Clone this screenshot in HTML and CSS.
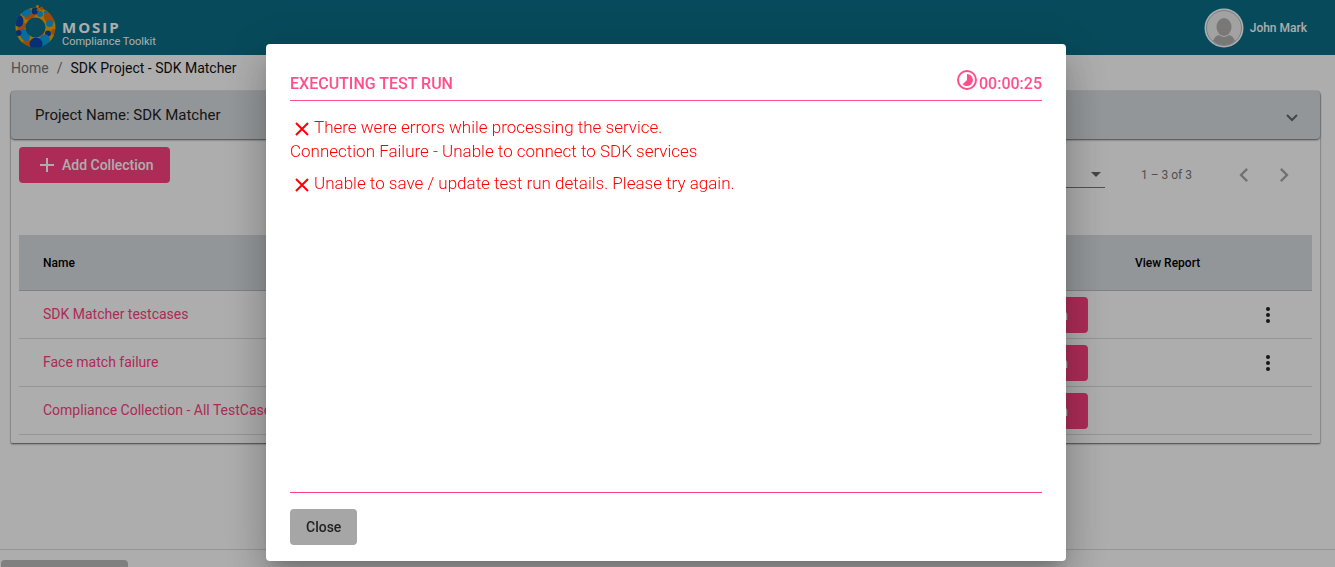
FILE: index.html
```html
<!DOCTYPE html>
<html lang="en">
<head>
<meta charset="utf-8">
<meta name="viewport" content="width=device-width, initial-scale=1">
<title>Compliance Toolkit</title>
<link rel="stylesheet" href="styles.css">
</head>
<body>
<div class="page">
  <header class="topbar">
    <a class="brand" href="#">
      <svg class="brand-mark" viewBox="0 0 41 45" aria-hidden="true">
        <defs><mask id="ring"><circle cx="20.500" cy="22.500" r="20" fill="#fff"/><circle cx="20.500" cy="22.500" r="10" fill="#000"/></mask></defs>
        <g mask="url(#ring)">
          <rect width="41" height="45" fill="#f2a900"/>
          <ellipse cx="15" cy="11" rx="6" ry="3" transform="rotate(-25 15 11)" fill="#e86c10"/>
          <circle cx="11" cy="7" r="5" fill="#109ee8"/>
          <ellipse cx="7" cy="22" rx="5" ry="3" transform="rotate(-40 7 22)" fill="#e86c10"/>
          <ellipse cx="4" cy="16" rx="4.500" ry="6" fill="#0a46b0"/>
          <circle cx="20" cy="6" r="3.500" fill="#0a46b0"/>
          <circle cx="25" cy="9" r="3" fill="#109ee8"/>
          <ellipse cx="34" cy="13" rx="4.500" ry="7" transform="rotate(-30 34 13)" fill="#e86c10"/>
          <circle cx="34.500" cy="18.500" r="3.500" fill="#109ee8"/>
          <circle cx="39" cy="27" r="3" fill="#e86c10"/>
          <circle cx="33" cy="28.500" r="3" fill="#0a46b0"/>
          <ellipse cx="29" cy="36" rx="5.500" ry="7" transform="rotate(30 29 36)" fill="#109ee8"/>
          <circle cx="12" cy="38" r="4" fill="#e86c10"/>
          <ellipse cx="10" cy="30" rx="4.500" ry="6.500" transform="rotate(-25 10 30)" fill="#109ee8"/>
          <circle cx="3.500" cy="28" r="3" fill="#0a46b0"/>
          <circle cx="21" cy="39" r="6.500" fill="#0a46b0"/>
        </g>
        <circle cx="22.500" cy="1.500" r="1.400" fill="#f2a900"/>
        <circle cx="26.500" cy="3.500" r="1.800" fill="#e86c10"/>
        <circle cx="23" cy="5" r="1.400" fill="#e86c10"/>
        <circle cx="30.500" cy="7" r="1.600" fill="#109ee8"/>
      </svg>
      <span class="brand-text"><span class="brand-name">MOSIP</span><span class="brand-sub">Compliance Toolkit</span></span>
    </a>
    <button class="user" type="button">
      <svg class="avatar" viewBox="0 0 40 40" aria-hidden="true">
        <defs><clipPath id="face"><circle cx="20" cy="20" r="17"/></clipPath></defs>
        <circle cx="20" cy="20" r="19.5" fill="#fff"/>
        <circle cx="20" cy="20" r="17.5" fill="#efefef" stroke="#8fa6ad" stroke-width=".7"/>
        <g clip-path="url(#face)" fill="#b3b1af"><ellipse cx="20" cy="19" rx="7.5" ry="9"/><path d="M8 38q1-10 7-11 5 4 10 0 6 1 7 11z"/></g>
      </svg>
      <span>John Mark</span>
    </button>
  </header>

  <nav class="crumbs" aria-label="Breadcrumb">
    <a href="#">Home</a><span class="slash">/</span><span class="current">SDK Project - SDK Matcher</span>
  </nav>

  <main class="panel">
    <button class="panel-head" type="button">
      <span>Project Name: SDK Matcher</span>
      <svg viewBox="0 0 12 8" width="12" height="8" aria-hidden="true"><path d="M1 1l5 5 5-5" fill="none" stroke="#666" stroke-width="2"/></svg>
    </button>
    <div class="panel-body">
      <div class="tools">
        <button class="btn add" type="button">
          <svg viewBox="0 0 14 14" width="14" height="14" aria-hidden="true"><path d="M7 0v14M0 7h14" stroke="#fff" stroke-width="2"/></svg>
          Add Collection
        </button>
        <div class="pager">
          <label for="size">Items per page:</label>
          <span class="size">
            <select id="size"><option>10</option></select>
            <svg viewBox="0 0 10 5" width="10" height="5" aria-hidden="true"><path d="M0 0h10L5 5z" fill="#666"/></svg>
          </span>
          <span class="range">1 – 3 of 3</span>
          <button class="step" type="button" aria-label="Previous page"><svg viewBox="0 0 24 24" width="28" height="28"><path d="M15.400 7.400L14 6l-6 6 6 6 1.400-1.400L10.800 12z"/></svg></button>
          <button class="step" type="button" aria-label="Next page"><svg viewBox="0 0 24 24" width="28" height="28"><path d="M10 6L8.600 7.400 13.200 12l-4.600 4.600L10 18l6-6z"/></svg></button>
        </div>
      </div>
      <table class="grid">
        <thead><tr><th class="name">Name</th><th class="run">Run</th><th class="report">View Report</th><th class="more"></th></tr></thead>
        <tbody>
          <tr><td><a href="#">SDK Matcher testcases</a></td><td class="run"><button class="btn" type="button">Run</button></td><td></td>
            <td><button class="dots" type="button" aria-label="More"><svg viewBox="0 0 24 24" width="24" height="24"><circle cx="12" cy="6" r="2"/><circle cx="12" cy="12" r="2"/><circle cx="12" cy="18" r="2"/></svg></button></td></tr>
          <tr><td><a href="#">Face match failure</a></td><td class="run"><button class="btn" type="button">Run</button></td><td></td>
            <td><button class="dots" type="button" aria-label="More"><svg viewBox="0 0 24 24" width="24" height="24"><circle cx="12" cy="6" r="2"/><circle cx="12" cy="12" r="2"/><circle cx="12" cy="18" r="2"/></svg></button></td></tr>
          <tr><td><a href="#">Compliance Collection - All TestCases</a></td><td class="run"><button class="btn" type="button">Run</button></td><td></td><td></td></tr>
        </tbody>
      </table>
    </div>
  </main>
  <footer class="foot"><span class="foot-tab"></span></footer>
</div>

<div class="backdrop">
  <section class="dialog" role="dialog" aria-modal="true" aria-labelledby="title">
    <header class="dialog-head">
      <h1 id="title">EXECUTING TEST RUN</h1>
      <span class="timer">
        <svg viewBox="0 0 24 24" width="24" height="24" aria-hidden="true"><circle cx="12" cy="12" r="9" fill="none" stroke="currentColor" stroke-width="2"/><path d="M12 6v6l-4.300 4.300A6 6 0 1 0 12 6z" fill="currentColor"/></svg>
        <span>00:00:25</span>
      </span>
    </header>
    <div class="dialog-body">
      <p><svg viewBox="0 0 24 24" width="24" height="24" aria-hidden="true"><path d="M6 6l12 12M18 6L6 18" stroke="currentColor" stroke-width="2"/></svg>There were errors while processing the service.<br>Connection Failure - Unable to connect to SDK services</p>
      <p><svg viewBox="0 0 24 24" width="24" height="24" aria-hidden="true"><path d="M6 6l12 12M18 6L6 18" stroke="currentColor" stroke-width="2"/></svg>Unable to save / update test run details. Please try again.</p>
    </div>
    <footer class="dialog-foot"><button class="btn close" type="button">Close</button></footer>
  </section>
</div>
</body>
</html>
```
FILE: styles.css
```css
* { box-sizing: border-box; }
body { margin: 0; background: #fff; color: #222; font-family: Roboto, "Liberation Sans", sans-serif; font-size: 14px; overflow: hidden; }
button, select { font: inherit; border: 0; background: none; padding: 0; color: inherit; }
a { text-decoration: none; color: inherit; }
svg { display: block; flex: none; }

.page { min-height: 100vh; display: flex; flex-direction: column; }

.topbar { height: 55px; background: #0a6e86; color: #fff; display: flex; justify-content: space-between; align-items: center; padding: 0 28px 0 15px; }
.brand { display: flex; align-items: center; gap: 6px; height: 52px; }
.brand-mark { width: 41px; height: 45px; }
.brand-text { display: flex; flex-direction: column; padding-top: 13px; }
.brand-name { font-family: "Open Sans", sans-serif; font-weight: 700; font-size: 15px; line-height: 16px; letter-spacing: 2px; }
.brand-sub { font-size: 11px; line-height: 14px; }
.user { display: flex; align-items: center; gap: 6px; font-size: 12px; font-weight: 500; }
.avatar { width: 40px; height: 40px; }

.crumbs { display: flex; gap: 8px; padding: 3px 11px 0; line-height: 20px; height: 36px; }
.crumbs a, .slash { color: #777; }
.current { color: #111; }

.panel { margin: 0 15px 0 11px; border-radius: 4px 4px 1px 1px; background: #fff; box-shadow: 0 1px 2px rgba(0, 0, 0, .6), 0 0 1px rgba(0, 0, 0, .5); }
.panel-head { width: 100%; height: 48px; padding: 0 22px 0 24px; display: flex; justify-content: space-between; align-items: center; background: #d9dee2; border-radius: 4px; font-size: 15px; box-shadow: 0 1px 2px rgba(0, 0, 0, .6); }
.panel-head svg { margin-top: 6px; }
.panel-body { padding: 8px; }

.btn { height: 36px; padding: 0 20px; border-radius: 4px; background: #ff4081; color: #fff; font-weight: 500; }
.tools { display: flex; justify-content: space-between; align-items: flex-start; margin-bottom: 32px; }
.add { display: flex; align-items: center; gap: 8px; padding: 0 16px 0 21px; }
.pager { display: flex; align-items: center; height: 56px; padding-right: 8px; font-size: 12px; color: #777; }
.size { display: flex; align-items: center; width: 56px; height: 25px; margin-left: 4px; padding-right: 4px; border-bottom: 1px solid #777; }
.size select { appearance: none; flex: 1; }
.range { margin: 0 32px 0 36px; }
.step { width: 40px; height: 40px; display: grid; place-items: center; fill: #a8a8a8; }

.grid { width: 100%; border-collapse: separate; border-spacing: 0; table-layout: fixed; }
.grid th { height: 56px; padding: 0; background: #d9dee2; border-bottom: 1px solid #bcc1c5; text-align: left; font-size: 12px; font-weight: 500; color: #000; }
.grid td { height: 48px; padding: 0; border-bottom: 1px solid #dcdcdc; }
.grid .name, .grid td:first-child { padding-left: 24px; }
.grid td:first-child { padding-bottom: 2px; color: #ff4081; }
.grid .run { width: 22%; }
.grid td.run { padding-right: 47px; text-align: right; }
.grid .report { width: 121px; }
.grid .more { width: 56px; }
.dots { display: grid; width: 24px; fill: #222; }

.foot { margin-top: auto; height: 18px; border-top: 1px solid #dcdcdc; padding: 10px 1px 0; display: flex; }
.foot-tab { width: 127px; background: #bdbdbd; border-radius: 4px 4px 0 0; }

.backdrop { position: fixed; inset: 0; background: rgba(0, 0, 0, .32); display: flex; justify-content: center; align-items: flex-start; padding: 44px 19px 6px 16px; }
.dialog { width: 800px; max-width: 100%; height: 100%; padding: 24px 24px 16px; background: #fff; border-radius: 4px; display: flex; flex-direction: column; box-shadow: 0 11px 15px -7px rgba(0, 0, 0, .2), 0 24px 38px 3px rgba(0, 0, 0, .14), 0 9px 46px 8px rgba(0, 0, 0, .12); }
.dialog-head { display: flex; justify-content: space-between; height: 33px; border-bottom: 1px solid #ff4f8b; color: #ff4f8b; font-size: 16px; font-weight: 500; line-height: 32px; }
.dialog-head h1 { margin: 0; font: inherit; }
.timer { display: flex; }
.dialog-body { flex: 1; padding-top: 14px; border-bottom: 1px solid #ff4081; color: #f00; font-size: 17px; font-weight: 300; line-height: 24px; }
.dialog-body p { margin: 0 0 8px; }
.dialog-body svg { display: inline-block; vertical-align: middle; height: 24px; margin: -2px 0; }
.dialog-foot { padding-top: 16px; }
.close { padding: 0 16px; background: #a6a6a6; color: #222; }
```
